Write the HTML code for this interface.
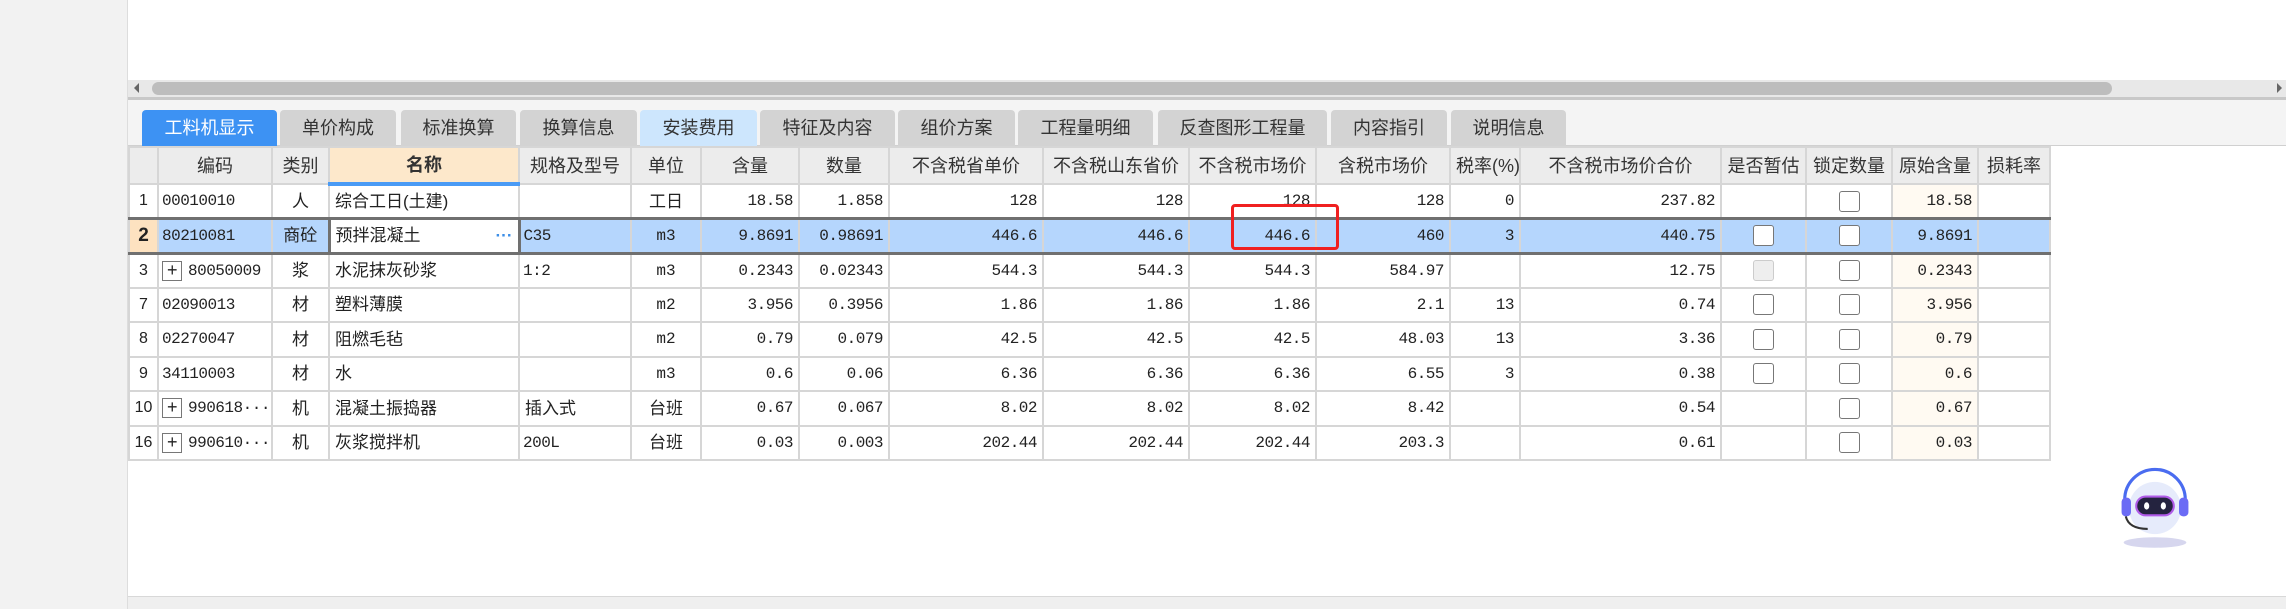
<!DOCTYPE html>
<html><head><meta charset="utf-8"><style>
*{box-sizing:border-box;margin:0;padding:0}
body{width:2286px;height:609px;overflow:hidden;background:#fff;position:relative;font-family:"Liberation Sans","Noto Sans CJK SC",sans-serif;color:#222}
.left{position:absolute;left:0;top:0;width:128px;height:609px;background:#f2f2f2;border-right:1px solid #ddd}
.sb{position:absolute;left:128px;top:80px;width:2158px;height:17px;background:#e8e8e8}
.thumb{position:absolute;left:24px;top:2px;width:1960px;height:13px;border-radius:7px;background:#bdbdbd}
.sbl{position:absolute;left:128px;top:97px;width:2158px;height:3px;background:#c8c8c8}
.tabbar{position:absolute;left:128px;top:100px;width:2158px;height:46px;background:#f4f4f4;border-bottom:1px solid #d0d0d0}
.tab{position:absolute;top:110px;height:36px;background:#d3d3d3;border-radius:4px 4px 0 0;font-size:18px;line-height:36px;text-align:center;color:#333}
table{position:absolute;left:128px;top:146px;width:1921px;border-collapse:collapse;table-layout:fixed;font-size:17px;line-height:1}
td,th{border:2px solid #d6d6d6;height:34.5px;padding:0 5px;white-space:nowrap;overflow:hidden;font-weight:normal}
th{background:#ececec;height:37px;font-size:18px;color:#333}
th.nm{background:#fde8cb;font-weight:bold;border-bottom:4px solid #4a9bf5}
td.n{text-align:right;font-family:"Liberation Mono",monospace;font-size:16px;letter-spacing:-0.5px}
td.c{text-align:center}
td.rn{text-align:center;padding:0;font-size:16px}
td.co{font-family:"Liberation Mono",monospace;font-size:16px;letter-spacing:-0.5px;padding-left:3px}
tr.sel td{background:#b5d6fd;border-top:3px solid #707070;border-bottom:3px solid #707070}
tr.sel td.rn{background:#fde2c0;font-weight:bold;font-size:19px}
tr.sel td.nmc{background:#fff;border:3px solid #707070}
td.orig{background:#fffaf2}
tr.sel td.orig{background:#b5d6fd}
.cb{display:inline-block;width:21px;height:21px;border:1.5px solid #777;border-radius:3px;background:#fff;vertical-align:middle}
.cb.d{border-color:#ccc;background:#eee}
.pl{display:inline-block;width:20px;height:20px;border:1.5px solid #777;vertical-align:middle;text-align:center;line-height:16px;font-size:18px;margin-right:6px;font-family:"Liberation Sans",sans-serif}
.red{position:absolute;left:1231px;top:204px;width:108px;height:46px;border:3px solid #f02020;border-radius:4px}
.bot{position:absolute;left:128px;top:596px;width:2158px;height:13px;background:#efefef;border-top:1px solid #d8d8d8}
</style></head><body>
<div class="left"></div>
<div class="sb"><div style="position:absolute;left:6px;top:3px;width:0;height:0;border-top:5px solid transparent;border-bottom:5px solid transparent;border-right:5px solid #666"></div><div class="thumb"></div><div style="position:absolute;right:4px;top:3px;width:0;height:0;border-top:5px solid transparent;border-bottom:5px solid transparent;border-left:5px solid #666"></div></div>
<div class="sbl"></div>
<div class="tabbar"></div>
<div class="tab" style="left:142px;width:135px;background:#3d92f3;color:#fff">工料机显示</div>
<div class="tab" style="left:280px;width:116px">单价构成</div>
<div class="tab" style="left:401px;width:115px">标准换算</div>
<div class="tab" style="left:520px;width:117px">换算信息</div>
<div class="tab" style="left:640px;width:117px;background:#cde6fd">安装费用</div>
<div class="tab" style="left:760px;width:135px">特征及内容</div>
<div class="tab" style="left:898px;width:117px">组价方案</div>
<div class="tab" style="left:1018px;width:135px">工程量明细</div>
<div class="tab" style="left:1158px;width:169px">反查图形工程量</div>
<div class="tab" style="left:1331px;width:116px">内容指引</div>
<div class="tab" style="left:1451px;width:115px">说明信息</div>
<table>
<colgroup><col style="width:29px"><col style="width:114px"><col style="width:57px"><col style="width:190px"><col style="width:112px"><col style="width:70px"><col style="width:98px"><col style="width:90px"><col style="width:154px"><col style="width:146px"><col style="width:127px"><col style="width:134px"><col style="width:70px"><col style="width:201px"><col style="width:85px"><col style="width:86px"><col style="width:86px"><col style="width:72px"></colgroup>
<tr><th></th><th>编码</th><th>类别</th><th class="nm">名称</th><th>规格及型号</th><th>单位</th><th>含量</th><th>数量</th><th>不含税省单价</th><th>不含税山东省价</th><th>不含税市场价</th><th>含税市场价</th><th>税率(%)</th><th>不含税市场价合价</th><th>是否暂估</th><th>锁定数量</th><th>原始含量</th><th>损耗率</th></tr>
<tr><td class="rn">1</td><td class="co">00010010</td><td class="c">人</td><td>综合工日(土建)</td><td></td><td class="c">工日</td><td class="n">18.58</td><td class="n">1.858</td><td class="n">128</td><td class="n">128</td><td class="n">128</td><td class="n">128</td><td class="n">0</td><td class="n">237.82</td><td></td><td class="c"><span class="cb"></span></td><td class="n orig">18.58</td><td></td></tr>
<tr class="sel"><td class="rn">2</td><td class="co">80210081</td><td class="c">商砼</td><td class="nmc">预拌混凝土<span style="float:right;color:#3d8fe8;font-weight:bold">···</span></td><td class="co">C35</td><td class="c" style="font-family:'Liberation Mono',monospace;font-size:16px">m3</td><td class="n">9.8691</td><td class="n">0.98691</td><td class="n">446.6</td><td class="n">446.6</td><td class="n">446.6</td><td class="n">460</td><td class="n">3</td><td class="n">440.75</td><td class="c"><span class="cb"></span></td><td class="c"><span class="cb"></span></td><td class="n orig">9.8691</td><td></td></tr>
<tr><td class="rn">3</td><td class="co"><span class="pl">+</span>80050009</td><td class="c">浆</td><td>水泥抹灰砂浆</td><td class="co">1:2</td><td class="c" style="font-family:'Liberation Mono',monospace;font-size:16px">m3</td><td class="n">0.2343</td><td class="n">0.02343</td><td class="n">544.3</td><td class="n">544.3</td><td class="n">544.3</td><td class="n">584.97</td><td class="n"></td><td class="n">12.75</td><td class="c"><span class="cb d"></span></td><td class="c"><span class="cb"></span></td><td class="n orig">0.2343</td><td></td></tr>
<tr><td class="rn">7</td><td class="co">02090013</td><td class="c">材</td><td>塑料薄膜</td><td></td><td class="c" style="font-family:'Liberation Mono',monospace;font-size:16px">m2</td><td class="n">3.956</td><td class="n">0.3956</td><td class="n">1.86</td><td class="n">1.86</td><td class="n">1.86</td><td class="n">2.1</td><td class="n">13</td><td class="n">0.74</td><td class="c"><span class="cb"></span></td><td class="c"><span class="cb"></span></td><td class="n orig">3.956</td><td></td></tr>
<tr><td class="rn">8</td><td class="co">02270047</td><td class="c">材</td><td>阻燃毛毡</td><td></td><td class="c" style="font-family:'Liberation Mono',monospace;font-size:16px">m2</td><td class="n">0.79</td><td class="n">0.079</td><td class="n">42.5</td><td class="n">42.5</td><td class="n">42.5</td><td class="n">48.03</td><td class="n">13</td><td class="n">3.36</td><td class="c"><span class="cb"></span></td><td class="c"><span class="cb"></span></td><td class="n orig">0.79</td><td></td></tr>
<tr><td class="rn">9</td><td class="co">34110003</td><td class="c">材</td><td>水</td><td></td><td class="c" style="font-family:'Liberation Mono',monospace;font-size:16px">m3</td><td class="n">0.6</td><td class="n">0.06</td><td class="n">6.36</td><td class="n">6.36</td><td class="n">6.36</td><td class="n">6.55</td><td class="n">3</td><td class="n">0.38</td><td class="c"><span class="cb"></span></td><td class="c"><span class="cb"></span></td><td class="n orig">0.6</td><td></td></tr>
<tr><td class="rn">10</td><td class="co"><span class="pl">+</span>990618···</td><td class="c">机</td><td>混凝土振捣器</td><td>插入式</td><td class="c">台班</td><td class="n">0.67</td><td class="n">0.067</td><td class="n">8.02</td><td class="n">8.02</td><td class="n">8.02</td><td class="n">8.42</td><td class="n"></td><td class="n">0.54</td><td></td><td class="c"><span class="cb"></span></td><td class="n orig">0.67</td><td></td></tr>
<tr><td class="rn">16</td><td class="co"><span class="pl">+</span>990610···</td><td class="c">机</td><td>灰浆搅拌机</td><td class="co">200L</td><td class="c">台班</td><td class="n">0.03</td><td class="n">0.003</td><td class="n">202.44</td><td class="n">202.44</td><td class="n">202.44</td><td class="n">203.3</td><td class="n"></td><td class="n">0.61</td><td></td><td class="c"><span class="cb"></span></td><td class="n orig">0.03</td><td></td></tr>
</table>
<div class="red"></div>
<svg style="position:absolute;left:2108px;top:460px" width="94" height="94" viewBox="0 0 90 90">
<ellipse cx="45" cy="79" rx="30" ry="5" fill="#d6d6ee"/>
<path d="M16 38 A29 29 0 0 1 74 38" fill="none" stroke="#4a6cf0" stroke-width="3"/>
<circle cx="45" cy="46" r="25" fill="#e6ebfb"/>
<rect x="13" y="36" width="9" height="18" rx="4" fill="#6b6bf5"/>
<rect x="68" y="36" width="9" height="18" rx="4" fill="#6b6bf5"/>
<rect x="27" y="35" width="36" height="18" rx="9" fill="#24233f" stroke="#b05be8" stroke-width="2"/>
<ellipse cx="37" cy="44" rx="2.5" ry="3.5" fill="#fff"/><ellipse cx="53" cy="44" rx="2.5" ry="3.5" fill="#fff"/>
<path d="M17 54 Q20 66 38 66" fill="none" stroke="#333" stroke-width="2"/>
</svg>
<div class="bot"></div>
</body></html>
